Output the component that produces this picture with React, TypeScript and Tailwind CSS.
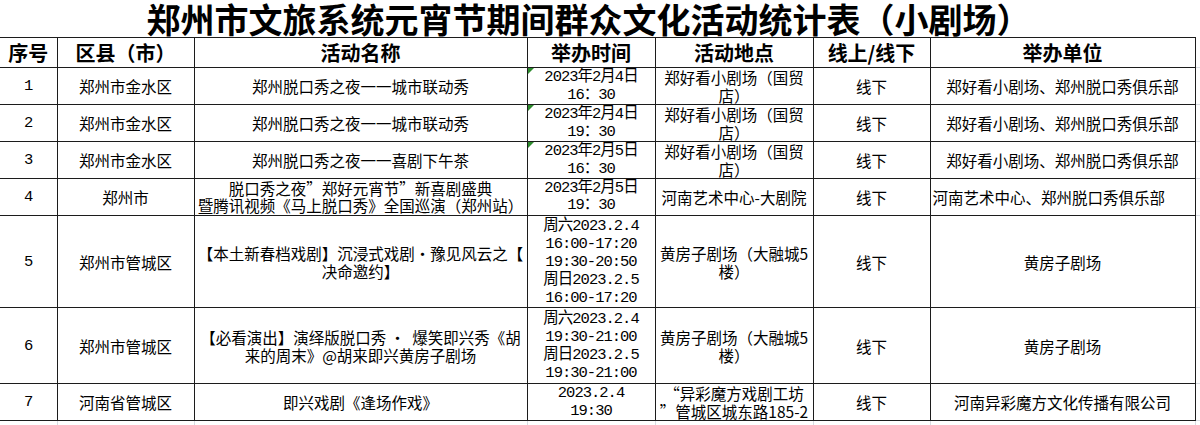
const cols = [57, 137, 333, 128, 158, 117, 265, 5]

type Row = {
  no: string
  county: string
  name: string[]
  time: string[]
  place: string[]
  mode: string
  org: string
  orgLeft?: boolean
  flag?: boolean
  h: string
  line: string
}

const rows: Row[] = [
  {
    no: '1', county: '郑州市金水区', name: ['郑州脱口秀之夜一一城市联动秀'], time: ['2023年2月4日', '16：30'],
    place: ['郑好看小剧场（国贸', '店）'], mode: '线下', org: '郑好看小剧场、郑州脱口秀俱乐部', flag: true, h: 'h-[37px]', line: 'h-[18px] leading-[18px]',
  },
  {
    no: '2', county: '郑州市金水区', name: ['郑州脱口秀之夜一一城市联动秀'], time: ['2023年2月4日', '19：30'],
    place: ['郑好看小剧场（国贸', '店）'], mode: '线下', org: '郑好看小剧场、郑州脱口秀俱乐部', flag: true, h: 'h-[37px]', line: 'h-[18px] leading-[18px]',
  },
  {
    no: '3', county: '郑州市金水区', name: ['郑州脱口秀之夜一一喜剧下午茶'], time: ['2023年2月5日', '16：30'],
    place: ['郑好看小剧场（国贸', '店）'], mode: '线下', org: '郑好看小剧场、郑州脱口秀俱乐部', flag: true, h: 'h-[37px]', line: 'h-[18px] leading-[18px]',
  },
  {
    no: '4', county: '郑州市', name: ['脱口秀之夜”郑好元宵节”新喜剧盛典', '暨腾讯视频《马上脱口秀》全国巡演（郑州站）'], time: ['2023年2月5日', '19：30'],
    place: ['河南艺术中心-大剧院'], mode: '线下', org: '河南艺术中心、郑州脱口秀俱乐部', orgLeft: true, h: 'h-[37px]', line: 'h-[17px] leading-[17px]',
  },
  {
    no: '5', county: '郑州市管城区', name: ['【本土新春档戏剧】沉浸式戏剧•豫见风云之【', '决命邀约】'],
    time: ['周六2023.2.4', '16:00-17:20', '19:30-20:50', '周日2023.2.5', '16:00-17:20'],
    place: ['黄房子剧场（大融城5', '楼）'], mode: '线下', org: '黄房子剧场', h: 'h-[92px]', line: 'h-[18px] leading-[18px]',
  },
  {
    no: '6', county: '郑州市管城区', name: ['【必看演出】演绎版脱口秀 ·  爆笑即兴秀《胡', '来的周末》@胡来即兴黄房子剧场'],
    time: ['周六2023.2.4', '19:30-21:00', '周日2023.2.5', '19:30-21:00'],
    place: ['黄房子剧场（大融城5', '楼）'], mode: '线下', org: '黄房子剧场', h: 'h-[76px]', line: 'h-[18px] leading-[18px]',
  },
  {
    no: '7', county: '河南省管城区', name: ['即兴戏剧《逢场作戏》'], time: ['2023.2.4', '19:30'],
    place: ['“异彩魔方戏剧工坊', '”管城区城东路185-2'], mode: '线下', org: '河南异彩魔方文化传播有限公司', h: 'h-[37px]', line: 'h-[18px] leading-[18px]',
  },
]

const headers = ['序号', '区县（市）', '活动名称', '举办时间', '活动地点', '线上/线下', '举办单位']

const cell = 'border border-[#1c1c1c] p-0 text-center align-middle overflow-hidden'
const sans = "font-['Noto_Sans_CJK_SC',sans-serif]"
const mono = "font-['Liberation_Mono','Noto_Sans_CJK_SC',monospace] tracking-[-1px]"

function Lines({ items, line }: { items: string[]; line: string }) {
  return (
    <>
      {items.map((t, i) => (
        <div key={i} className={`whitespace-pre overflow-visible ${line}`}>{t}</div>
      ))}
    </>
  )
}

export default function App() {
  return (
    <div className="w-[1200px] h-[425px] bg-white overflow-hidden text-black">
      <table className="table-fixed border-collapse w-[1200px]">
        <colgroup>
          {cols.map((w, i) => (
            <col key={i} style={{ width: w }} />
          ))}
        </colgroup>
        <tbody>
          <tr className="h-[37px]">
            <td colSpan={7} className="p-0 align-middle">
              <div className={`flex justify-center pr-[18px] h-[37px] text-[34px] leading-[37px] font-bold ${sans}`}>
                郑州市文旅系统元宵节期间群众文化活动统计表（小剧场）
              </div>
            </td>
            <td className="p-0" />
          </tr>
          <tr className="h-[30px]">
            {headers.map((h, i) => (
              <td key={h} className={`${cell} ${i === 0 ? 'border-l-0' : ''} text-[20px] font-bold ${sans}`}>
                <div className="h-[28px] leading-[28px]">{h}</div>
              </td>
            ))}
            <td className="p-0 border-b border-[#d8dce2]" />
          </tr>
          {rows.map((r) => (
            <tr key={r.no} className={`${r.h} text-[15.5px]`}>
              <td className={`${cell} border-l-0 ${mono}`}>
                <Lines items={[r.no]} line={r.line} />
              </td>
              <td className={`${cell} ${sans}`}>
                <Lines items={[r.county]} line={r.line} />
              </td>
              <td className={`${cell} ${sans}`}>
                <Lines items={r.name} line={r.line} />
              </td>
              <td className={`${cell} relative ${mono}`}>
                {r.flag && (
                  <span className="absolute left-0 top-0 w-0 h-0 border-t-[6px] border-r-[6px] border-t-[#2e8b2e] border-r-transparent" />
                )}
                <Lines items={r.time} line={r.line} />
              </td>
              <td className={`${cell} ${sans}`}>
                <Lines items={r.place} line={r.line} />
              </td>
              <td className={`${cell} ${sans}`}>
                <Lines items={[r.mode]} line={r.line} />
              </td>
              <td className={`${cell} ${sans} ${r.orgLeft ? 'text-left pl-[2px]' : ''}`}>
                <Lines items={[r.org]} line={r.line} />
              </td>
              <td className="p-0 border-b border-[#d8dce2]" />
            </tr>
          ))}
          <tr className="h-[6px]">
            {cols.slice(0, 7).map((_, i) => (
              <td key={i} className={`p-0 ${i === 0 ? '' : 'border-l border-[#d8dce2]'}`} />
            ))}
            <td className="p-0 border-l border-[#d8dce2]" />
          </tr>
        </tbody>
      </table>
    </div>
  )
}
